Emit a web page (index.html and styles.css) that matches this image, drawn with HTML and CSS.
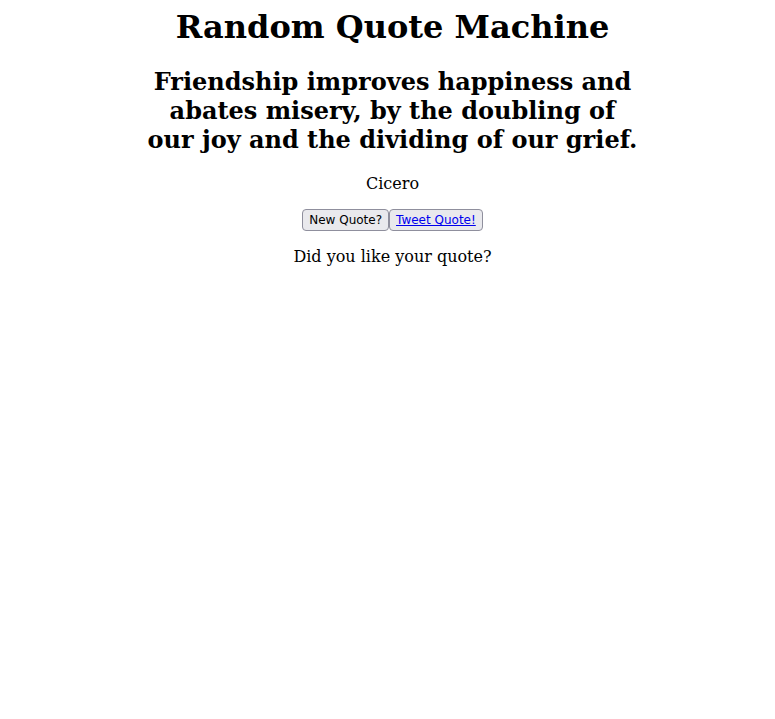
FILE: index.html
```html
<!DOCTYPE html>
<html>
<head>
<meta charset="utf-8">
<link rel="stylesheet" href="styles.css">
</head>
<body>
<div class="app">
<h1 class="title">Random Quote Machine</h1>
<div class="quote-box">
<h2 class="quote">Friendship improves happiness and abates misery, by the doubling of our joy and the dividing of our grief.</h2>
<p class="author">Cicero</p>
<div class="buttons"><button class="btn">New Quote?</button><button class="btn"><a href="#">Tweet Quote!</a></button></div>
<p class="ask">Did you like your quote?</p>
</div>
</div>
</body>
</html>
```

FILE: styles.css
```css
body {
  font-family: "DejaVu Serif", serif;
}
.app {
  text-align: center;
  padding-left: 10px;
}
.title {
  margin-top: 0;
}
.quote-box {
  width: 500px;
  margin: 0 auto;
}
.btn {
  font-family: "DejaVu Sans", sans-serif;
  font-size: 12px;
  line-height: 16px;
  padding: 2px 6px;
  color: #000;
  background: #e9e9ed;
  border: 1px solid #8f8f9d;
  border-radius: 4px;
  margin: 0;
}
.btn a {
  color: #0000ee;
}
```
